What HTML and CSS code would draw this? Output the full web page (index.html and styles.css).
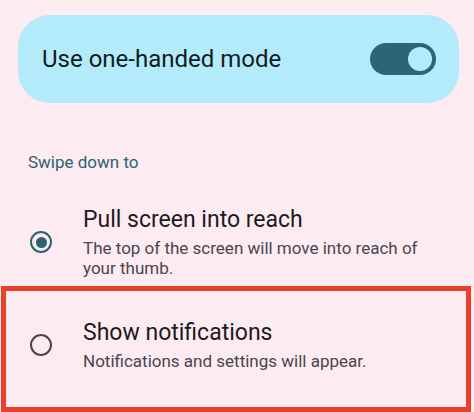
FILE: index.html
```html
<!DOCTYPE html>
<html lang="en">
<head>
    <meta charset="UTF-8">
    <meta name="viewport" content="width=device-width, initial-scale=1.0">
    <title>One-handed mode</title>
    <link rel="stylesheet" href="styles.css">
</head>
<body>

<div class="screen">
    <!-- Main switch -->
    <div class="card">
        <span class="card-label">Use one-handed mode</span>
        <span class="switch on"><span class="switch-thumb"></span></span>
    </div>

    <div class="section-title">Swipe down to</div>

    <!-- Options -->
    <div class="option">
        <span class="radio checked"></span>
        <div class="option-text">
            <div class="option-title">Pull screen into reach</div>
            <div class="option-desc">The top of the screen will move into reach of your thumb.</div>
        </div>
    </div>

    <div class="option highlight">
        <span class="radio"></span>
        <div class="option-text">
            <div class="option-title">Show notifications</div>
            <div class="option-desc">Notifications and settings will appear.</div>
        </div>
    </div>
</div>

</body>
</html>
```

FILE: styles.css
```css
body {
    margin: 0;
    font-family: Roboto, "Noto Sans", sans-serif;
    background-color: #fcebf1; /* pale pink background */
}
.screen {
    width: 474px;
    height: 412px;
    overflow: hidden;
    padding-top: 15px;
    box-sizing: border-box;
}
.card {
    display: flex;
    align-items: center;
    justify-content: space-between;
    margin: 0 15px 0 18px;
    height: 88px;
    padding: 0 23px 0 24px;
    border-radius: 32px;
    background-color: #b4ebfa; /* light cyan card */
}
.card-label {
    font-size: 24px;
    color: #101c21;
}
.switch {
    display: flex;
    align-items: center;
    justify-content: flex-end;
    width: 66px;
    height: 32px;
    padding: 0 4px;
    box-sizing: border-box;
    border-radius: 16px;
    background-color: #2b6674;
}
.switch-thumb {
    width: 24px;
    height: 24px;
    border-radius: 50%;
    background-color: #b4ebfa;
}
.section-title {
    margin-top: 49px;
    padding-left: 28px;
    font-size: 17px;
    line-height: 20px;
    color: #2b6371;
}
.option {
    display: flex;
    align-items: center;
    gap: 31px;
    padding-left: 30px;
    margin-top: 34px;
}
.option.highlight {
    margin: 8px 3px 0 1px;
    padding: 28px 0 36px 24px;
    border: 5px solid #e8412b; /* red outline */
}
.radio {
    flex: none;
    width: 22px;
    height: 22px;
    box-sizing: border-box;
    border: 2.5px solid #49454e;
    border-radius: 50%;
    display: flex;
    align-items: center;
    justify-content: center;
}
.radio.checked {
    border-color: #2b6371;
}
.radio.checked::after {
    content: "";
    width: 11px;
    height: 11px;
    border-radius: 50%;
    background-color: #2b6371;
}
.option-text {
    max-width: 350px;
}
.option-title {
    font-size: 23px;
    line-height: 28px;
    color: #1d1b1e;
}
.option-desc {
    margin-top: 4px;
    font-size: 17px;
    line-height: 20px;
    color: #4a454e;
}
```
